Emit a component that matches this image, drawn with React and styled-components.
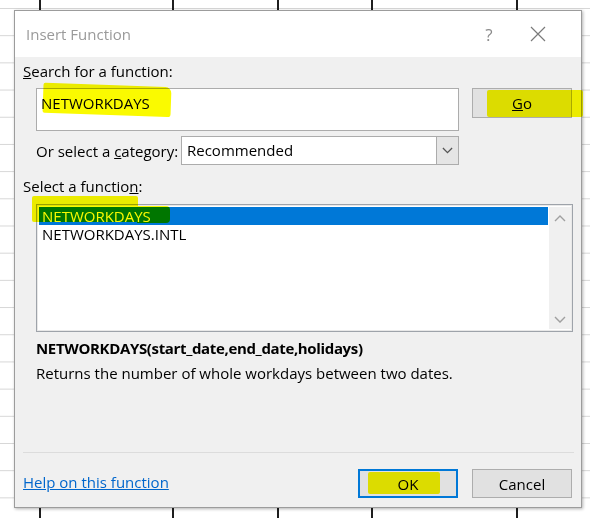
import React from "react";
import styled, { createGlobalStyle } from "styled-components";

const Global = createGlobalStyle`
  html, body { margin: 0; padding: 0; overflow: hidden; }
  body { font-family: "Open Sans", "Noto Sans", "Liberation Sans", sans-serif; }
  * { box-sizing: border-box; }
`;

const Sheet = styled.div`
  position: relative;
  width: 590px;
  height: 518px;
  overflow: hidden;
  background-color: #ffffff;
  background-image:
    linear-gradient(to right,
      transparent 39px, #1e1e1e 39px, #1e1e1e 41px, transparent 41px,
      transparent 172px, #1e1e1e 172px, #1e1e1e 174px, transparent 174px,
      transparent 277px, #1e1e1e 277px, #1e1e1e 279px, transparent 279px,
      transparent 371px, #1e1e1e 371px, #1e1e1e 373px, transparent 373px,
      transparent 516px, #1e1e1e 516px, #1e1e1e 518px, transparent 518px),
    linear-gradient(to bottom, #d6d6d6 0, #d6d6d6 1px, transparent 1px);
  background-size: 100% 100%, 100% 27.2px;
  background-position: 0 0, 0 8px;
  background-repeat: no-repeat, repeat-y;
`;

const Dialog = styled.div`
  position: absolute;
  left: 14px;
  top: 10px;
  width: 568px;
  height: 498px;
  background: #f0f0f0;
  border: 1px solid #9c9c9c;
  box-shadow: 1px 1px 3px rgba(0, 0, 0, 0.3);
  display: flex;
  flex-direction: column;
  color: #000;
  font-size: 15px;
`;

const TitleBar = styled.div`
  height: 46px;
  flex: none;
  background: #ffffff;
  display: flex;
  align-items: center;
  padding-left: 11px;
`;

const Title = styled.div`
  flex: 1;
  font-size: 15px;
  color: #9a9a9a;
`;

const TitleButton = styled.div`
  width: ${(p) => p.$w}px;
  height: 46px;
  display: flex;
  align-items: center;
  justify-content: center;
  color: #8a8a8a;
  font-size: 17px;
`;

const Body = styled.div`
  flex: 1;
  display: flex;
  flex-direction: column;
  padding: 0 9px 0 8px;
`;

const Label = styled.div`
  height: 18px;
  line-height: 18px;
  margin-top: ${(p) => p.$mt}px;
  white-space: nowrap;
`;

const SearchRow = styled.div`
  display: flex;
  align-items: flex-start;
  margin-top: 8px;
  padding-left: 13px;
  height: 43px;
`;

const SearchBox = styled.div`
  width: 423px;
  height: 43px;
  background: #fff;
  border: 1px solid #acacac;
  padding: 4px 4px;
  line-height: 20px;
`;

const Button = styled.div`
  width: 100px;
  height: ${(p) => p.$h || 29}px;
  margin-left: ${(p) => p.$ml || 0}px;
  background: #e1e1e1;
  border: ${(p) => (p.$default ? "2px solid #0078d7" : "1px solid #adadad")};
  display: flex;
  align-items: center;
  justify-content: center;
  flex: none;
`;

const CategoryRow = styled.div`
  display: flex;
  align-items: center;
  margin-top: 5px;
  padding-left: 13px;
  height: 29px;
`;

const CategoryLabel = styled.div`
  width: 145px;
  white-space: nowrap;
`;

const Combo = styled.div`
  width: 278px;
  height: 29px;
  display: flex;
  background: #fff;
  border: 1px solid #acacac;
`;

const ComboText = styled.div`
  flex: 1;
  padding-left: 5px;
  line-height: 27px;
`;

const ComboButton = styled.div`
  width: 22px;
  background: #e5e5e5;
  border-left: 1px solid #acacac;
  display: flex;
  align-items: center;
  justify-content: center;
`;

const ListBox = styled.div`
  margin-top: 9px;
  margin-left: 13px;
  width: 537px;
  height: 128px;
  background: #fff;
  border: 1px solid #9ea3aa;
  box-shadow: inset 0 0 0 1px #e8e8e8;
  display: flex;
  padding: 2px 1px 2px 2px;
`;

const ListItems = styled.div`
  flex: 1;
  display: flex;
  flex-direction: column;
`;

const ListItem = styled.div`
  height: 18px;
  line-height: 18px;
  padding-left: 3px;
  background: ${(p) => (p.$selected ? "#0078d7" : "transparent")};
  color: ${(p) => (p.$selected ? "#fff" : "#000")};
`;

const ScrollBar = styled.div`
  width: 22px;
  margin-left: 1px;
  background: #f0f0f0;
  display: flex;
  flex-direction: column;
  justify-content: space-between;
  align-items: center;
  padding: 8px 0 6px;
`;

const Syntax = styled.div`
  margin-top: 7px;
  padding-left: 13px;
  height: 18px;
  line-height: 18px;
  font-weight: 700;
  letter-spacing: -0.35px;
`;

const Description = styled.div`
  margin-top: 7px;
  padding-left: 13px;
  height: 18px;
  line-height: 18px;
`;

const Separator = styled.div`
  margin-top: 70px;
  height: 1px;
  width: 551px;
  background: #dcdcdc;
`;

const Footer = styled.div`
  margin-top: 16px;
  height: 29px;
  display: flex;
  align-items: center;
`;

const HelpLink = styled.a`
  flex: 1;
  color: #0066cc;
  text-decoration: underline;
  margin-top: -4px;
  cursor: pointer;
`;

const Highlight = styled.div`
  position: absolute;
  left: ${(p) => p.$x}px;
  top: ${(p) => p.$y}px;
  width: ${(p) => p.$w}px;
  height: ${(p) => p.$h}px;
  background: rgb(250, 250, 0);
  mix-blend-mode: multiply;
  border-radius: ${(p) => p.$r || "3px"};
  transform: rotate(${(p) => p.$rot || 0}deg);
  pointer-events: none;
`;

const Chevron = ({ up, color = "#a0a0a0", size = 12 }) => (
  <svg width={size} height={size * 0.6} viewBox="0 0 12 7">
    <polyline
      points={up ? "1,6 6,1 11,6" : "1,1 6,6 11,1"}
      fill="none"
      stroke={color}
      strokeWidth="1.4"
    />
  </svg>
);

export default function App() {
  return (
    <>
      <Global />
      <Sheet>
        <Dialog>
          <TitleBar>
            <Title>Insert Function</Title>
            <TitleButton $w={40}>?</TitleButton>
            <TitleButton $w={58}>
              <svg width="16" height="16" viewBox="0 0 16 16">
                <path d="M1 1 L15 15 M15 1 L1 15" stroke="#7a7a7a" strokeWidth="1.2" />
              </svg>
            </TitleButton>
            <div style={{ width: 14 }} />
          </TitleBar>
          <Body>
            <Label $mt={5}>
              <u>S</u>earch for a function:
            </Label>
            <SearchRow>
              <SearchBox>NETWORKDAYS</SearchBox>
              <Button $ml={13} $h={30}>
                <span>
                  <u>G</u>o
                </span>
              </Button>
            </SearchRow>
            <CategoryRow>
              <CategoryLabel>
                Or select a <u>c</u>ategory:
              </CategoryLabel>
              <Combo>
                <ComboText>Recommended</ComboText>
                <ComboButton>
                  <Chevron color="#555" size={11} />
                </ComboButton>
              </Combo>
            </CategoryRow>
            <Label $mt={12}>
              Select a functio<u>n</u>:
            </Label>
            <ListBox>
              <ListItems>
                <ListItem $selected>NETWORKDAYS</ListItem>
                <ListItem>NETWORKDAYS.INTL</ListItem>
              </ListItems>
              <ScrollBar>
                <Chevron up />
                <Chevron />
              </ScrollBar>
            </ListBox>
            <Syntax>NETWORKDAYS(start_date,end_date,holidays)</Syntax>
            <Description>Returns the number of whole workdays between two dates.</Description>
            <Separator />
            <Footer>
              <HelpLink>Help on this function</HelpLink>
              <Button $default>OK</Button>
              <Button $ml={14}>Cancel</Button>
            </Footer>
          </Body>
        </Dialog>
        <Highlight $x={43} $y={85} $w={128} $h={30} $rot={2} $r="2px 6px 3px 2px" />
        <Highlight $x={487} $y={90} $w={96} $h={27} $r="2px" />
        <Highlight $x={32} $y={196} $w={106} $h={26} $r="2px" />
        <Highlight $x={137} $y={206} $w={33} $h={17} $r="0 4px 4px 0" />
        <Highlight $x={368} $y={472} $w={72} $h={22} $r="2px" />
      </Sheet>
    </>
  );
}
